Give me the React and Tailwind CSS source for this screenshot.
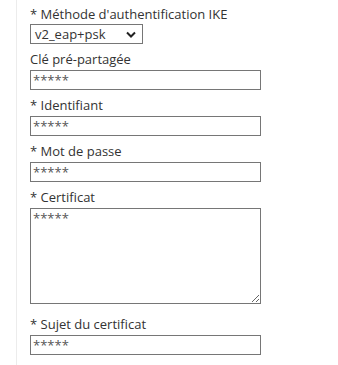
import React from 'react'

const font = { fontFamily: '"Open Sans", "Noto Sans", sans-serif' }

function Label({ required, children }) {
  return (
    <div className="text-[13px] leading-[18px] text-[#333]">
      {required && <span>* </span>}
      {children}
    </div>
  )
}

function TextInput() {
  return (
    <input
      type="text"
      readOnly
      value="*****"
      className="mt-[2px] block w-[231px] h-[20px] border border-[#767676] bg-white px-[2px] text-[13px] leading-[18px] text-[#555] outline-none"
    />
  )
}

function Field({ label, required }) {
  return (
    <div className="mt-[6px]">
      <Label required={required}>{label}</Label>
      <TextInput />
    </div>
  )
}

export default function App() {
  return (
    <div className="w-[338px] h-[365px] bg-white overflow-hidden" style={font}>
      <div className="ml-4 h-full border-l border-[#ececec] pl-[13px] pt-[5px]">
        <Label required>Méthode d'authentification IKE</Label>
        <div className="relative mt-[1px] w-[113px] h-[20px] border border-[#767676] bg-white">
          <span className="absolute left-[4px] top-0 text-[13px] leading-[18px] text-[#333]">v2_eap+psk</span>
          <svg className="absolute right-[6px] top-[6px]" width="10" height="7" viewBox="0 0 10 7">
            <path d="M1 1.5 L5 5.5 L9 1.5" fill="none" stroke="#222" strokeWidth="2" />
          </svg>
        </div>

        <Field label="Clé pré-partagée" />
        <Field label="Identifiant" required />
        <Field label="Mot de passe" required />

        <div className="mt-[6px]">
          <Label required>Certificat</Label>
          <textarea
            readOnly
            value="*****"
            className="mt-[2px] block w-[231px] h-[96px] border border-[#767676] bg-white px-[2px] text-[13px] leading-[18px] text-[#555] outline-none resize"
          />
        </div>

        <div className="mt-[11px]">
          <Label required>Sujet du certificat</Label>
          <TextInput />
        </div>
      </div>
    </div>
  )
}
